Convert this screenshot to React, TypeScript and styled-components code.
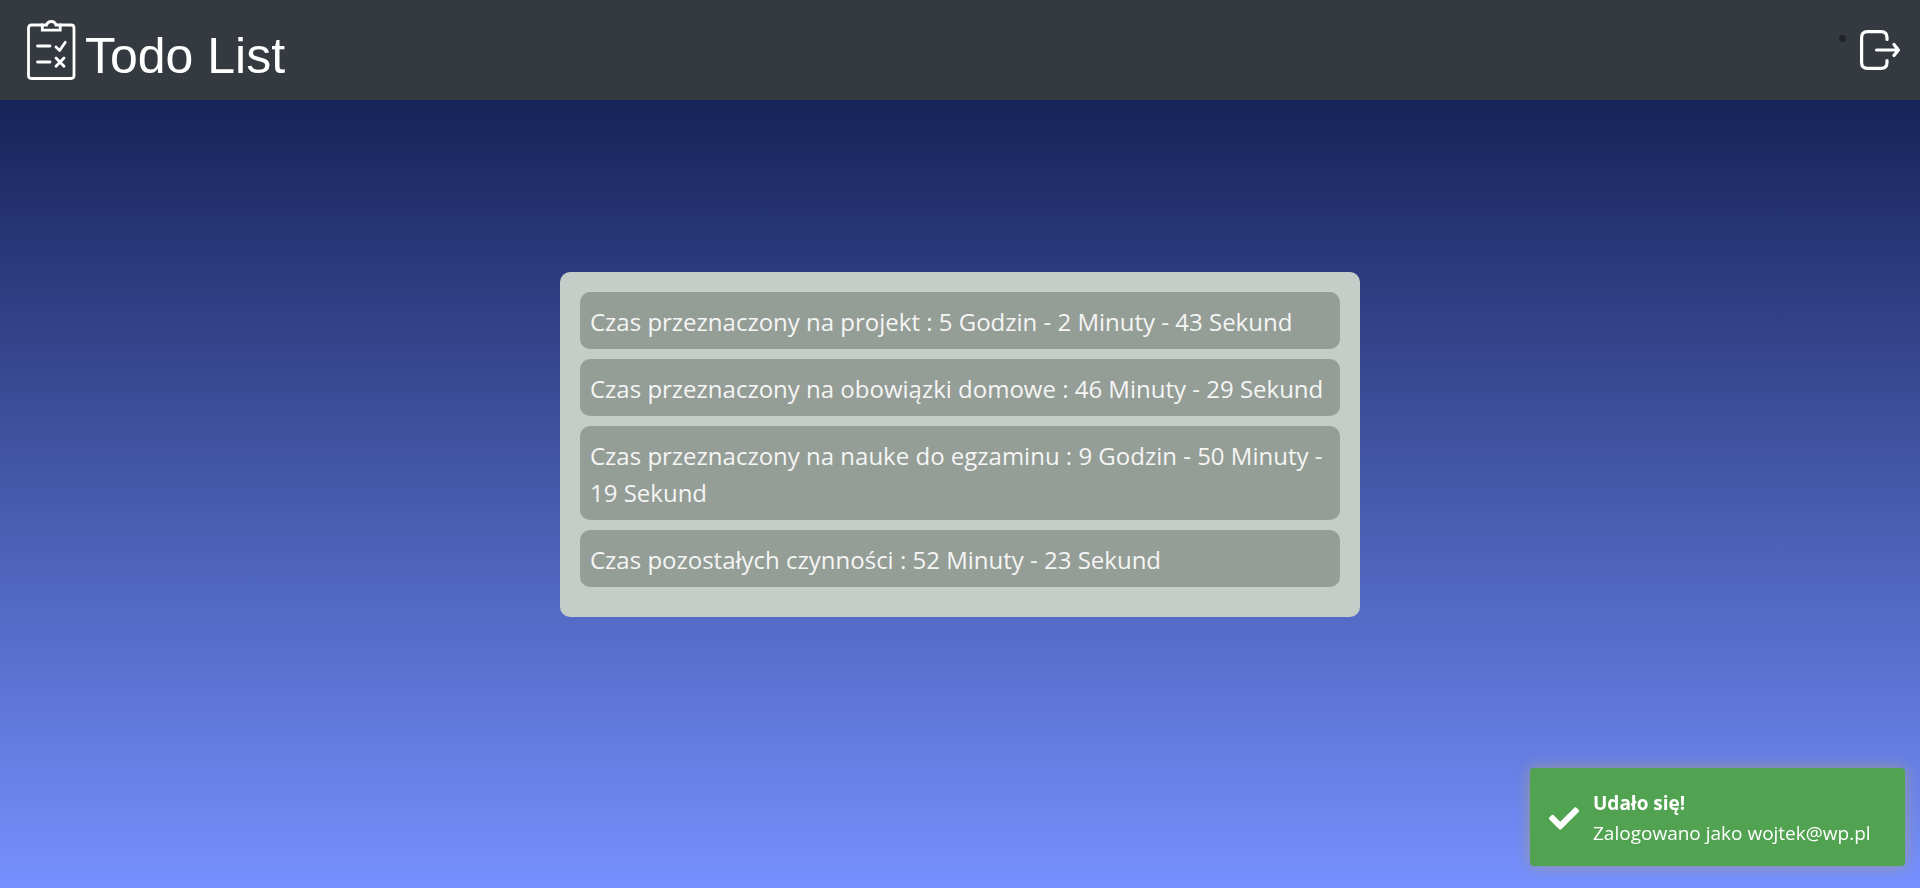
import React from "react";
import styled, { createGlobalStyle } from "styled-components";

const GlobalStyle = createGlobalStyle`
  *, *::before, *::after { box-sizing: border-box; }
  body {
    margin: 0;
    font-family: "Segoe UI", "Open Sans", "Noto Sans", sans-serif;
    color: #212529;
  }
`;

const Page = styled.div`
  display: flex;
  flex-direction: column;
  min-height: 100vh;
  background: linear-gradient(#0a1543, #7690ff);
`;

const Header = styled.header`
  display: flex;
  align-items: center;
  justify-content: space-between;
  height: 100px;
  padding: 0 20px 0 27px;
  background: #343a40;
`;

const Brand = styled.a`
  display: flex;
  align-items: center;
  gap: 9px;
  color: #fff;
  text-decoration: none;
`;

const BrandName = styled.span`
  padding-top: 12px;
  font-family: Arial, "Liberation Sans", sans-serif;
  font-size: 50px;
  line-height: 56px;
`;

const NavList = styled.ul`
  display: flex;
  margin: 0;
  padding: 0;
  list-style: none;
`;

const NavItem = styled.li`
  display: flex;
  gap: 14px;

  &::before {
    content: "";
    width: 7px;
    height: 7px;
    margin-top: 5px;
    border-radius: 50%;
    background: #212529;
  }
`;

const LogoutButton = styled.button`
  display: block;
  padding: 0;
  border: 0;
  background: none;
  color: #fff;
  cursor: pointer;

  svg { display: block; }
`;

const Main = styled.main`
  flex: 1;
  display: flex;
  align-items: center;
  justify-content: center;
  padding: 0 20px 100px;
`;

const Card = styled.ul`
  width: 100%;
  max-width: 800px;
  margin: 0;
  padding: 20px 20px 30px;
  border-radius: 10px;
  background: #c6ccc8;
  display: flex;
  flex-direction: column;
  gap: 10px;
  list-style: none;
`;

const TimeRow = styled.li`
  padding: 11px 10px 9px;
  border-radius: 10px;
  background: #949d96;
  color: #f5f5f5;
  font-size: 24px;
  line-height: 37px;
`;

const Toast = styled.div`
  position: fixed;
  right: 15px;
  bottom: 22px;
  display: flex;
  align-items: center;
  gap: 14px;
  width: 375px;
  padding: 20px 19px 18px;
  border-radius: 4px;
  background: #51a351;
  box-shadow: 0 0 15px #999999;
  color: #fff;
  font-size: 19px;
  line-height: 30px;
`;

const ToastTitle = styled.strong`
  display: block;
`;

const entries = [
  "Czas przeznaczony na projekt : 5 Godzin - 2 Minuty - 43 Sekund",
  "Czas przeznaczony na obowiązki domowe : 46 Minuty - 29 Sekund",
  "Czas przeznaczony na nauke do egzaminu : 9 Godzin - 50 Minuty - 19 Sekund",
  "Czas pozostałych czynności : 52 Minuty - 23 Sekund",
];

const ClipboardIcon = () => (
  <svg width="49" height="60" viewBox="0 0 49 60" fill="none" stroke="currentColor" strokeWidth="2.8" strokeLinecap="round" strokeLinejoin="round" aria-hidden="true">
    <path d="M15 5H4.500Q1.500 5 1.500 8V55.500Q1.500 58.500 4.500 58.500H44Q47 58.500 47 55.500V8Q47 5 44 5H33.500" />
    <path d="M15.300 5H19.500Q20.500 1.500 24.300 1.500Q28 1.500 29 5H33.200V10.200H15.300Z" strokeLinejoin="miter" />
    <path d="M10.500 26H23M10.500 42H23" />
    <path d="M29 27L32.600 30.500L38.300 22.300M29 38L37 46.300M37 38L29 46.300" />
  </svg>
);

const LogoutIcon = () => (
  <svg width="40" height="40" viewBox="0 0 40 40" fill="none" stroke="currentColor" strokeWidth="3.2" strokeLinecap="round" strokeLinejoin="round" aria-hidden="true">
    <path d="M27 9.500V7.500Q27 1.600 21 1.600H7.500Q1.600 1.600 1.600 7.500V32.500Q1.600 38.400 7.500 38.400H21Q27 38.400 27 32.500V30.500" />
    <path d="M16.500 20H38M34 14.500L38.400 20L34 25.500" />
  </svg>
);

const CheckIcon = () => (
  <svg width="30" height="23" viewBox="0 0 512 386" fill="currentColor" aria-hidden="true">
    <path d="M173.900 375.400l-166.400-166.400c-10-10-10-26.200 0-36.200l36.200-36.200c10-10 26.200-10 36.200 0L192 248.700 432.100 8.600c10-10 26.200-10 36.200 0l36.200 36.200c10 10 10 26.200 0 36.200l-294.400 294.400c-10 10-26.200 10-36.200 0z" />
  </svg>
);

export default function App() {
  return (
    <>
      <GlobalStyle />
      <Page>
        <Header>
          <Brand href="#">
            <ClipboardIcon />
            <BrandName>Todo List</BrandName>
          </Brand>
          <nav>
            <NavList>
              <NavItem>
                <LogoutButton type="button" aria-label="Wyloguj">
                  <LogoutIcon />
                </LogoutButton>
              </NavItem>
            </NavList>
          </nav>
        </Header>
        <Main>
          <Card>
            {entries.map((entry) => (
              <TimeRow key={entry}>{entry}</TimeRow>
            ))}
          </Card>
        </Main>
      </Page>
      <Toast role="status">
        <CheckIcon />
        <div>
          <ToastTitle>Udało się!</ToastTitle>
          Zalogowano jako wojtek@wp.pl
        </div>
      </Toast>
    </>
  );
}
